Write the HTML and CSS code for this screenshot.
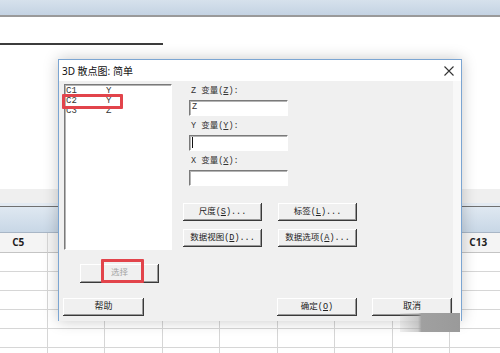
FILE: index.html
```html
<!DOCTYPE html>
<html lang="zh-CN">
<head>
  <meta charset="UTF-8">
  <title>3D 散点图: 简单</title>
  <link rel="stylesheet" href="styles.css">
</head>
<body>
  <div class="topbar"></div>
  <div class="doc"><div class="rule"></div></div>

  <div class="sheet">
    <div class="sheet-gap"></div>
    <div class="sheet-bar"></div>
    <!-- only C5 and C13 show beside the dialog -->
    <div class="grid">
      <div class="cell head">C5</div>
      <div class="cell head"></div>
      <div class="cell head"></div>
      <div class="cell head"></div>
      <div class="cell head"></div>
      <div class="cell head"></div>
      <div class="cell head"></div>
      <div class="cell head"></div>
      <div class="cell head">C13</div>
    </div>
    <div class="grid" id="rows"></div>
  </div>

  <div class="dialog">
    <div class="dlg-title">
      <span>3D 散点图: 简单</span>
      <svg class="close" width="10" height="10" viewBox="0 0 10 10">
        <path d="M0.5 0.5 L9.5 9.5 M9.5 0.5 L0.5 9.5" stroke="#333" stroke-width="1.1" fill="none"/>
      </svg>
    </div>
    <div class="dlg-body">
      <div class="dlg-main">
        <div class="dlg-left">
          <div class="listbox">
            <div class="item"><span class="col">C1</span><span>Y</span></div>
            <div class="item"><span class="col">C2</span><span>Y</span></div>
            <div class="item"><span class="col">C3</span><span>Z</span></div>
            <div class="mark mark-item"></div>
          </div>
          <div class="btn btn-select">
            <span class="disabled">选择</span>
            <div class="mark mark-select"></div>
          </div>
        </div>
        <div class="dlg-right">
          <div class="field">
            <div class="label">Z 变量(<u>Z</u>):</div>
            <div class="input">Z</div>
          </div>
          <div class="field">
            <div class="label">Y 变量(<u>Y</u>):</div>
            <div class="input"><span class="caret"></span></div>
          </div>
          <div class="field">
            <div class="label">X 变量(<u>X</u>):</div>
            <div class="input"></div>
          </div>
          <div class="btn-grid">
            <div class="btn"><span>尺度(<u>S</u>)...</span></div>
            <div class="btn"><span>标签(<u>L</u>)...</span></div>
            <div class="btn"><span>数据视图(<u>D</u>)...</span></div>
            <div class="btn"><span>数据选项(<u>A</u>)...</span></div>
          </div>
        </div>
      </div>
      <div class="dlg-foot">
        <div class="btn btn-help">帮助</div>
        <div class="btn btn-ok"><span>确定(<u>O</u>)</span></div>
        <div class="btn btn-cancel">取消</div>
      </div>
    </div>
  </div>

  <div class="smudge"></div>

  <script>
    var rows = document.getElementById('rows');
    var html = '';
    for (var i = 0; i < 9 * 6; i++) {
      html += '<div class="cell"></div>';
    }
    rows.innerHTML = html;
  </script>
</body>
</html>
```

FILE: styles.css
```css
body {
  margin: 0;
  width: 500px;
  height: 353px;
  overflow: hidden;
  position: relative;
  background-color: #fff;
  font-family: "Noto Sans", "Noto Sans CJK SC", sans-serif;
  color: #222;
}
.topbar {
  height: 15px;
  background: linear-gradient(#d6e1ec, #c4d3e3);
  border-bottom: 2px solid #9a9a9a;
}
.doc {
  height: 146px;
  padding-top: 26px;
}
.rule {
  width: 163px;
  height: 2px;
  background-color: #3c3c3c;
}
.sheet-gap {
  height: 14px;
  background-color: #efefef;
  border-bottom: 3px solid #e3eaf2;
}
.sheet-bar {
  height: 25px;
  border-top: 1px solid #707070;
  border-bottom: 1px solid #a8b6c6;
  background: linear-gradient(#dfe8f1, #c8d7e6);
}
.grid {
  display: grid;
  grid-template-columns: repeat(9, 57.5px);
  margin-left: -10px;
}
.cell {
  height: 19px;
  box-sizing: border-box;
  border-right: 1px solid #d6d6d6;
  border-bottom: 1px solid #d6d6d6;
}
.cell.head {
  height: 20px;
  background-color: #f4f4f4;
  border-bottom-color: #c4c4c4;
  font-family: "Open Sans", sans-serif;
  font-weight: bold;
  font-size: 10px;
  line-height: 19px;
  text-align: center;
  color: #1e1e1e;
}

/* dialog */
.dialog {
  position: absolute;
  left: 58px;
  top: 59px;
  width: 404px;
  height: 262px;
  box-sizing: border-box;
  border: 1px solid #7ba5d2;
  background-color: #fff;
  box-shadow: 0 0 14px rgba(0, 0, 0, 0.22);
}
.dlg-title {
  height: 21px;
  display: flex;
  align-items: center;
  justify-content: space-between;
  padding: 0 7px 0 3px;
  font-size: 10px;
  color: #111;
}
.dlg-body {
  height: 240px;
  box-sizing: border-box;
  padding: 3px 0 0 5px;
  background-color: #f0f0f0;
  border-right: 8px solid #f8f8f8;
  font-family: "Liberation Mono", "Noto Sans CJK SC", monospace;
  font-size: 8.5px;
}
.dlg-main {
  display: flex;
}
.dlg-left {
  width: 108px;
}
.listbox {
  position: relative;
  height: 166px;
  box-sizing: border-box;
  padding: 1px 0 0 1px;
  background-color: #fff;
  border: 1px solid;
  border-color: #7a7a7a #fff #fff #7a7a7a;
  box-shadow: inset 1px 1px #b4b4b4;
  font-size: 9px;
}
.item {
  display: flex;
  height: 10px;
  line-height: 10px;
  color: #333;
}
.item .col {
  width: 40px;
}
.mark {
  position: absolute;
  border: 3px solid #e2444b;
  border-radius: 1px;
  box-sizing: border-box;
}
.mark-item {
  left: -3px;
  top: 9px;
  width: 61px;
  height: 15px;
}
.mark-select {
  left: 21px;
  top: -5px;
  width: 43px;
  height: 24px;
}
.btn {
  position: relative;
  width: 79px;
  height: 18px;
  box-sizing: border-box;
  display: flex;
  align-items: center;
  justify-content: center;
  white-space: nowrap;
  line-height: 11px;
  background-color: #f0f0f0;
  box-shadow: inset -1px -1px #3a3a3a, inset 1px 1px #fff, inset -2px -2px #9a9a9a;
  font-family: "Liberation Mono", "Noto Sans CJK SC", monospace;
  font-size: 8.5px;
  color: #222;
}
.btn-select {
  margin: 14px 0 0 16px;
  height: 19px;
}
.disabled {
  color: #a3a3a3;
}
.dlg-right {
  margin-left: 11px;
}
.field {
  margin-left: 6px;
  margin-bottom: 3px;
}
.label {
  height: 14px;
  line-height: 14px;
  margin-bottom: 2px;
  padding-left: 2px;
  color: #333;
}
.input {
  width: 99px;
  height: 16px;
  box-sizing: border-box;
  padding-left: 2px;
  line-height: 13px;
  background-color: #fff;
  border: 1px solid;
  border-color: #7a7a7a #fff #fff #7a7a7a;
  box-shadow: inset 1px 1px #b4b4b4;
  color: #333;
}
.caret {
  display: inline-block;
  width: 1px;
  height: 11px;
  margin-top: 1px;
  background-color: #111;
  vertical-align: top;
}
.btn-grid {
  display: grid;
  grid-template-columns: 79px 79px;
  column-gap: 16px;
  row-gap: 8px;
  margin-top: 17px;
}
.dlg-foot {
  display: flex;
  margin-top: 15px;
  margin-left: -1px;
}
.btn-help {
  width: 81px;
  font-size: 9px;
}
.btn-ok {
  width: 80px;
  margin-left: 133px;
}
.btn-cancel {
  width: 80px;
  margin-left: 15px;
  font-size: 9px;
}
.smudge {
  position: absolute;
  left: 400px;
  top: 313px;
  width: 60px;
  height: 19px;
  background: linear-gradient(to right, rgba(170, 170, 170, 0.15), rgba(160, 160, 160, 0.5) 30%, #a0a0a0 36%, #9a9a9a);
}
```
